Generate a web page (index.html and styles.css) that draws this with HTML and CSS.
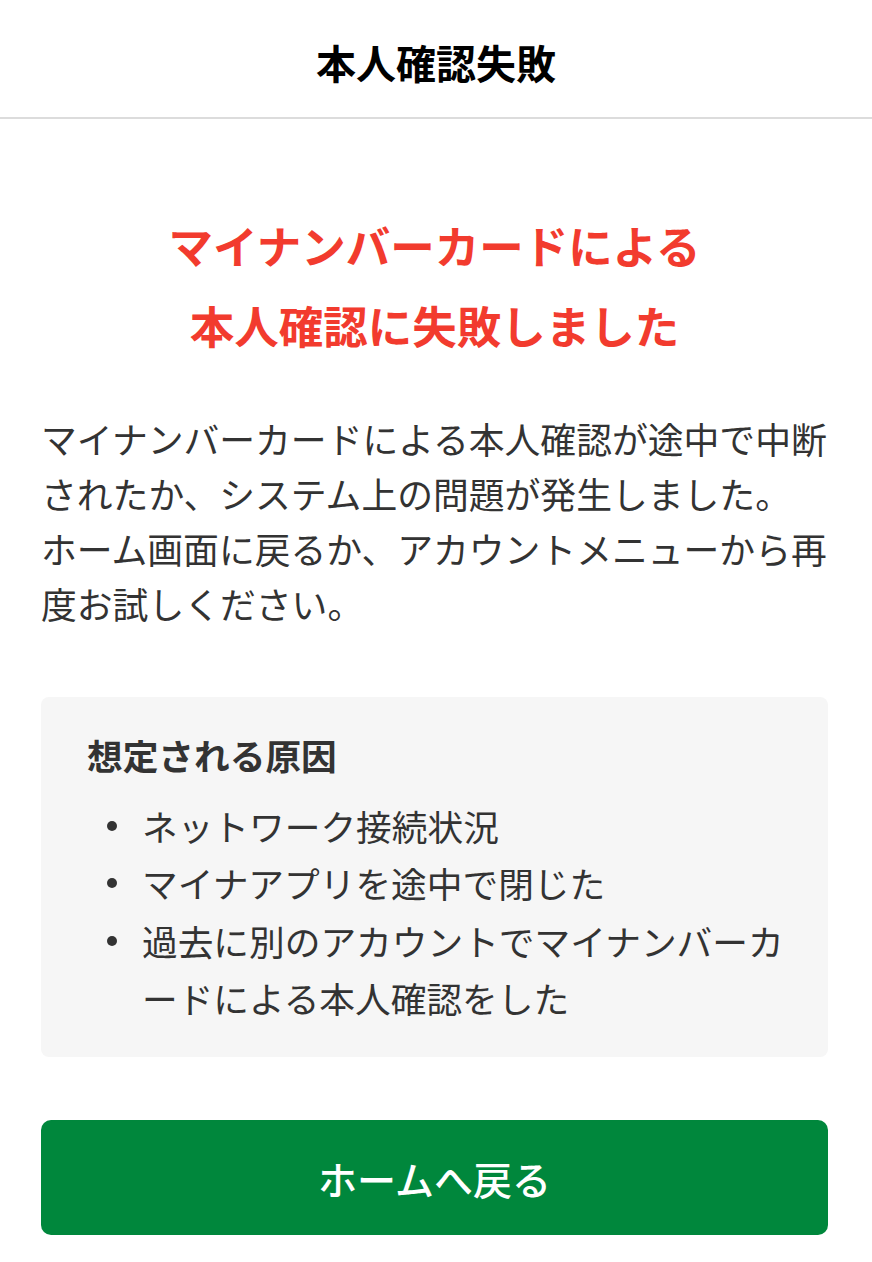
FILE: index.html
```html
<!DOCTYPE html>
<html lang="ja">
<head>
<meta charset="utf-8">
<title>本人確認失敗</title>
<link rel="stylesheet" href="styles.css">
</head>
<body>
<header class="app-header">
  <h1 class="app-title">本人確認失敗</h1>
</header>
<main class="content">
  <h2 class="error-title">マイナンバーカードによる<br>本人確認に失敗しました</h2>
  <p class="message">マイナンバーカードによる本人確認が途中で中断されたか、システム上の問題が発生しました。<br>ホーム画面に戻るか、アカウントメニューから再度お試しください。</p>
  <section class="causes">
    <h3 class="causes-title">想定される原因</h3>
    <ul class="causes-list">
      <li class="cause"><span>ネットワーク接続状況</span></li>
      <li class="cause"><span>マイナアプリを途中で閉じた</span></li>
      <li class="cause"><span>過去に別のアカウントでマイナンバーカードによる本人確認をした</span></li>
    </ul>
  </section>
  <a class="home-button" href="#">ホームへ戻る</a>
</main>
</body>
</html>
```

FILE: styles.css
```css
* {
  box-sizing: border-box;
}

html, body {
  margin: 0;
  padding: 0;
  background: #ffffff;
}

body {
  font-family: "Noto Sans CJK JP", "Noto Sans", sans-serif;
  color: #333333;
}

.app-header {
  height: 119px;
  padding-top: 8px;
  padding-bottom: 2px;
  border-bottom: 2px solid #dcdcdc;
  display: flex;
  align-items: center;
  justify-content: center;
}

.app-title {
  margin: 0;
  font-size: 40px;
  font-weight: 700;
  color: #000000;
  line-height: 1;
}

.content {
  padding: 0 44px 40px 41px;
}

.error-title {
  margin: 86px 0 0;
  font-size: 44.5px;
  line-height: 80px;
  font-weight: 700;
  color: #f23b2e;
  text-align: center;
}

.message {
  margin: 46px 0 0;
  font-size: 35.8px;
  line-height: 55px;
  color: #333333;
}

.causes {
  margin-top: 66px;
  background: #f6f6f6;
  border-radius: 8px;
  padding: 33px 40px 31px 46px;
}

.causes-title {
  margin: 0;
  font-size: 35.7px;
  line-height: 50px;
  font-weight: 700;
  color: #333333;
}

.causes-list {
  list-style: none;
  margin: 17px 0 0;
  padding: 0;
}

.cause {
  display: flex;
  align-items: flex-start;
  font-size: 35.7px;
  line-height: 57.3px;
  color: #333333;
  line-break: loose;
}

.cause::before {
  content: "";
  flex: 0 0 10px;
  height: 10px;
  border-radius: 50%;
  background: #333333;
  margin: 24px 25px 0 20px;
}

.home-button {
  margin-top: 63px;
  height: 115px;
  border-radius: 10px;
  background: #00873c;
  color: #ffffff;
  text-decoration: none;
  font-size: 39px;
  font-weight: 500;
  display: flex;
  align-items: center;
  justify-content: center;
}
```
